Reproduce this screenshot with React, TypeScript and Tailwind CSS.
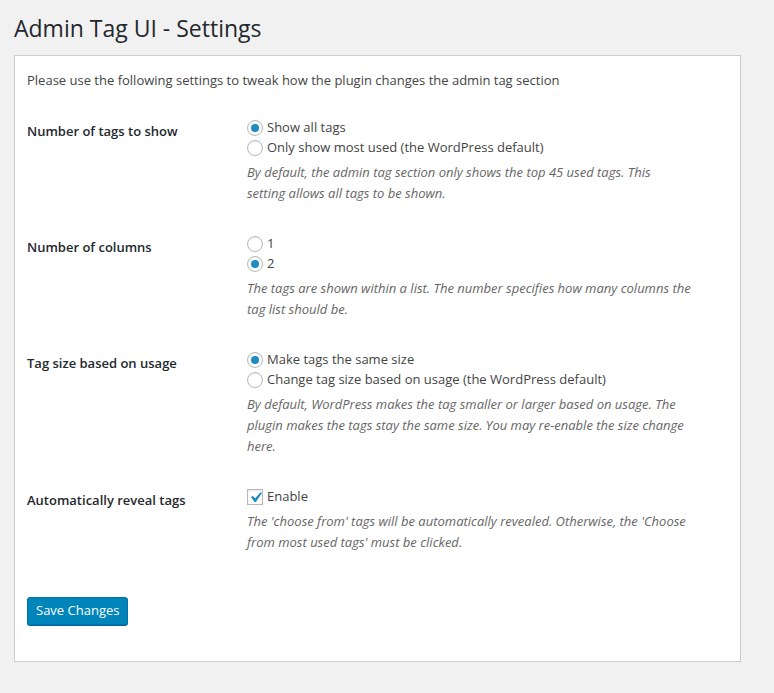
import React from "react";

const font = { fontFamily: '"Open Sans", "Noto Sans", sans-serif' };

function Radio({ checked, label }: { checked?: boolean; label: string }) {
  return (
    <label className="flex items-center h-[20px] text-[13px] text-[#444]">
      <span className="w-[16px] h-[16px] rounded-full border border-[#b4b9be] bg-white shadow-[inset_0_1px_2px_rgba(0,0,0,0.07)] flex items-center justify-center mr-[4px] shrink-0">
        {checked && <span className="w-[8px] h-[8px] rounded-full bg-[#1e8cbe]" />}
      </span>
      {label}
    </label>
  );
}

function Checkbox({ label }: { label: string }) {
  return (
    <label className="flex items-center h-[20px] text-[13px] text-[#444]">
      <span className="w-[16px] h-[16px] border border-[#b4b9be] bg-white shadow-[inset_0_1px_2px_rgba(0,0,0,0.1)] flex items-center justify-center mr-[4px] shrink-0 overflow-visible">
        <svg width="21" height="21" viewBox="0 0 20 20" className="shrink-0 -m-[3px]">
          <path d="M14.83 4.89l1.34.94-5.81 8.38H9.02L5.78 9.67l1.34-1.25 2.57 2.4z" fill="#1e8cbe" />
        </svg>
      </span>
      {label}
    </label>
  );
}

function Row({ title, children, desc }: { title: string; children: React.ReactNode; desc: React.ReactNode }) {
  return (
    <div className="flex py-[15px]">
      <div className="w-[220px] shrink-0 pt-[3px] text-[13px] font-semibold text-[#23282d] leading-[20px]">{title}</div>
      <div className="flex-1 pr-[10px]">
        {children}
        <p className="mt-[4px] text-[13px] italic text-[#666] leading-[21px]">{desc}</p>
      </div>
    </div>
  );
}

export default function App() {
  return (
    <div className="min-h-[693px] bg-[#f1f1f1] px-[14px] pt-[14px] pb-[30px]" style={font}>
      <h1 className="text-[23px] leading-[29px] font-normal text-[#23282d] mb-[12px]">Admin Tag UI - Settings</h1>
      <div className="w-[727px] bg-white border border-[#ccc] px-[12px] pt-[14px] pb-[36px]">
        <p className="text-[13px] leading-[20px] text-[#444]">
          Please use the following settings to tweak how the plugin changes the admin tag section
        </p>
        <div className="mt-[13px]">
          <Row
            title="Number of tags to show"
            desc={<>By default, the admin tag section only shows the top 45 used tags. This<br />setting allows all tags to be shown.</>}
          >
            <Radio checked label="Show all tags" />
            <Radio label="Only show most used (the WordPress default)" />
          </Row>
          <Row
            title="Number of columns"
            desc={<>The tags are shown within a list. The number specifies how many columns the<br />tag list should be.</>}
          >
            <Radio label="1" />
            <Radio checked label="2" />
          </Row>
          <Row
            title="Tag size based on usage"
            desc={<>By default, WordPress makes the tag smaller or larger based on usage. The<br />plugin makes the tags stay the same size. You may re-enable the size change<br />here.</>}
          >
            <Radio checked label="Make tags the same size" />
            <Radio label="Change tag size based on usage (the WordPress default)" />
          </Row>
          <Row
            title="Automatically reveal tags"
            desc={<>The 'choose from' tags will be automatically revealed. Otherwise, the 'Choose<br />from most used tags' must be clicked.</>}
          >
            <Checkbox label="Enable" />
          </Row>
        </div>
        <button className="mt-[29px] h-[28px] px-[8px] text-[13px] text-white bg-[#0085ba] border border-[#0073aa] rounded-[3px] shadow-[0_1px_0_#006799]">
          Save Changes
        </button>
      </div>
    </div>
  );
}
